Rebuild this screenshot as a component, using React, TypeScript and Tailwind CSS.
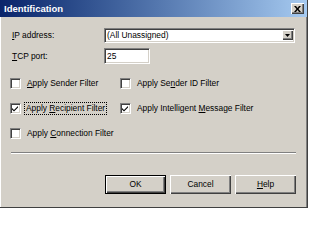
import React from 'react';

const font = { fontFamily: '"Liberation Sans", Arial, sans-serif' };

const Check = ({ checked }: { checked?: boolean }) => (
    <div className="w-[11px] h-[11px] shrink-0 bg-white border border-t-[#808080] border-l-[#808080] border-b-white border-r-white shadow-[inset_1px_1px_0_#404040,inset_-1px_-1px_0_#d4d0c8] flex items-center justify-center">
        {checked && (
            <svg width="7" height="7" viewBox="0 0 7 7">
                <path d="M0 3 L2 5 L6 1 L6 2.6 L2 6.6 L0 4.6 Z" fill="#000" />
            </svg>
        )}
    </div>
);

const CheckRow = ({ label, checked, focus }: { label: React.ReactNode; checked?: boolean; focus?: boolean }) => (
    <div className="flex items-center gap-[4px] h-[14px]">
        <Check checked={checked} />
        <span className={`px-[1px] leading-[11px] ${focus ? 'outline outline-1 outline-dotted outline-black' : 'border border-transparent'}`}>{label}</span>
    </div>
);

const Button = ({ children, isDefault }: { children: React.ReactNode; isDefault?: boolean }) => (
    <button
        className={`w-[61px] h-[19px] bg-[#d4d0c8] text-black text-[8.4px] flex items-center justify-center ${
            isDefault
                ? 'border border-black shadow-[inset_1px_1px_0_#fff,inset_-1px_-1px_0_#404040,inset_-2px_-2px_0_#808080]'
                : 'shadow-[inset_1px_1px_0_#fff,inset_-1px_-1px_0_#404040,inset_-2px_-2px_0_#808080]'
        }`}
    >
        {children}
    </button>
);

const App = () => {
    return (
        <div
            className="w-[308px] h-[208px] overflow-hidden bg-[#d4d0c8] flex flex-col border-r border-b border-[#404040] text-black text-[8.4px]"
            style={font}
        >
            {/* Title bar */}
            <div className="h-[17px] shrink-0 bg-gradient-to-r from-[#0a246a] to-[#a6caf0] flex items-center justify-between pl-[4px] pr-[3px]">
                <span className="text-white font-bold text-[9.5px] leading-none">Identification</span>
                <div className="w-[13px] h-[11px] bg-[#d4d0c8] shadow-[inset_1px_1px_0_#fff,inset_-1px_-1px_0_#404040,inset_-2px_-2px_0_#808080] flex items-center justify-center">
                    <svg width="7" height="6" viewBox="0 0 7 6">
                        <path d="M0 0 L2 0 L3.5 2 L5 0 L7 0 L4.5 3 L7 6 L5 6 L3.5 4 L2 6 L0 6 L2.5 3 Z" fill="#000" />
                    </svg>
                </div>
            </div>

            <div className="flex-1 flex border-l border-white">
                <div className="flex-1 flex flex-col pl-[10px] pr-[10px] border-r border-[#808080]">
                    {/* IP address */}
                    <div className="flex items-center mt-[10px] h-[16px]">
                        <span className="w-[93px] pl-[1px]"><u>I</u>P address:</span>
                        <div className="w-[191px] h-[15px] bg-white border border-t-[#808080] border-l-[#808080] border-b-white border-r-white shadow-[inset_1px_1px_0_#404040,inset_-1px_-1px_0_#d4d0c8] flex items-center justify-between pl-[2px] pr-[1px]">
                            <span className="leading-none">(All Unassigned)</span>
                            <div className="w-[11px] h-[10px] bg-[#d4d0c8] shadow-[inset_1px_1px_0_#fff,inset_-1px_-1px_0_#404040,inset_-2px_-2px_0_#808080] flex items-center justify-center">
                                <svg width="5" height="3" viewBox="0 0 5 3">
                                    <path d="M0 0 L5 0 L2.5 3 Z" fill="#000" />
                                </svg>
                            </div>
                        </div>
                    </div>

                    {/* TCP port */}
                    <div className="flex items-center mt-[5px] h-[16px]">
                        <span className="w-[93px] pl-[1px]"><u>T</u>CP port:</span>
                        <div className="w-[46px] h-[16px] bg-white border border-t-[#808080] border-l-[#808080] border-b-white border-r-white shadow-[inset_1px_1px_0_#404040,inset_-1px_-1px_0_#d4d0c8] flex items-center pl-[2px]">
                            <span className="leading-none">25</span>
                        </div>
                    </div>

                    {/* Filters */}
                    <div className="grid grid-cols-[110px_1fr] gap-y-[11px] mt-[12px] -ml-[1px]">
                        <CheckRow label={<><u>A</u>pply Sender Filter</>} />
                        <CheckRow label={<>Apply Se<u>n</u>der ID Filter</>} />
                        <CheckRow label={<>Apply <u>R</u>ecipient Filter</>} checked focus />
                        <CheckRow label={<>Apply Intelligent <u>M</u>essage Filter</>} checked />
                        <CheckRow label={<>Apply <u>C</u>onnection Filter</>} />
                    </div>

                    {/* Separator */}
                    <div className="mt-[12px] border-t border-b border-t-[#808080] border-b-white" />

                    {/* Buttons */}
                    <div className="flex justify-end gap-[4px] mt-[21px]">
                        <Button isDefault>OK</Button>
                        <Button>Cancel</Button>
                        <Button><u>H</u>elp</Button>
                    </div>
                </div>
            </div>
        </div>
    );
};

export default App;
